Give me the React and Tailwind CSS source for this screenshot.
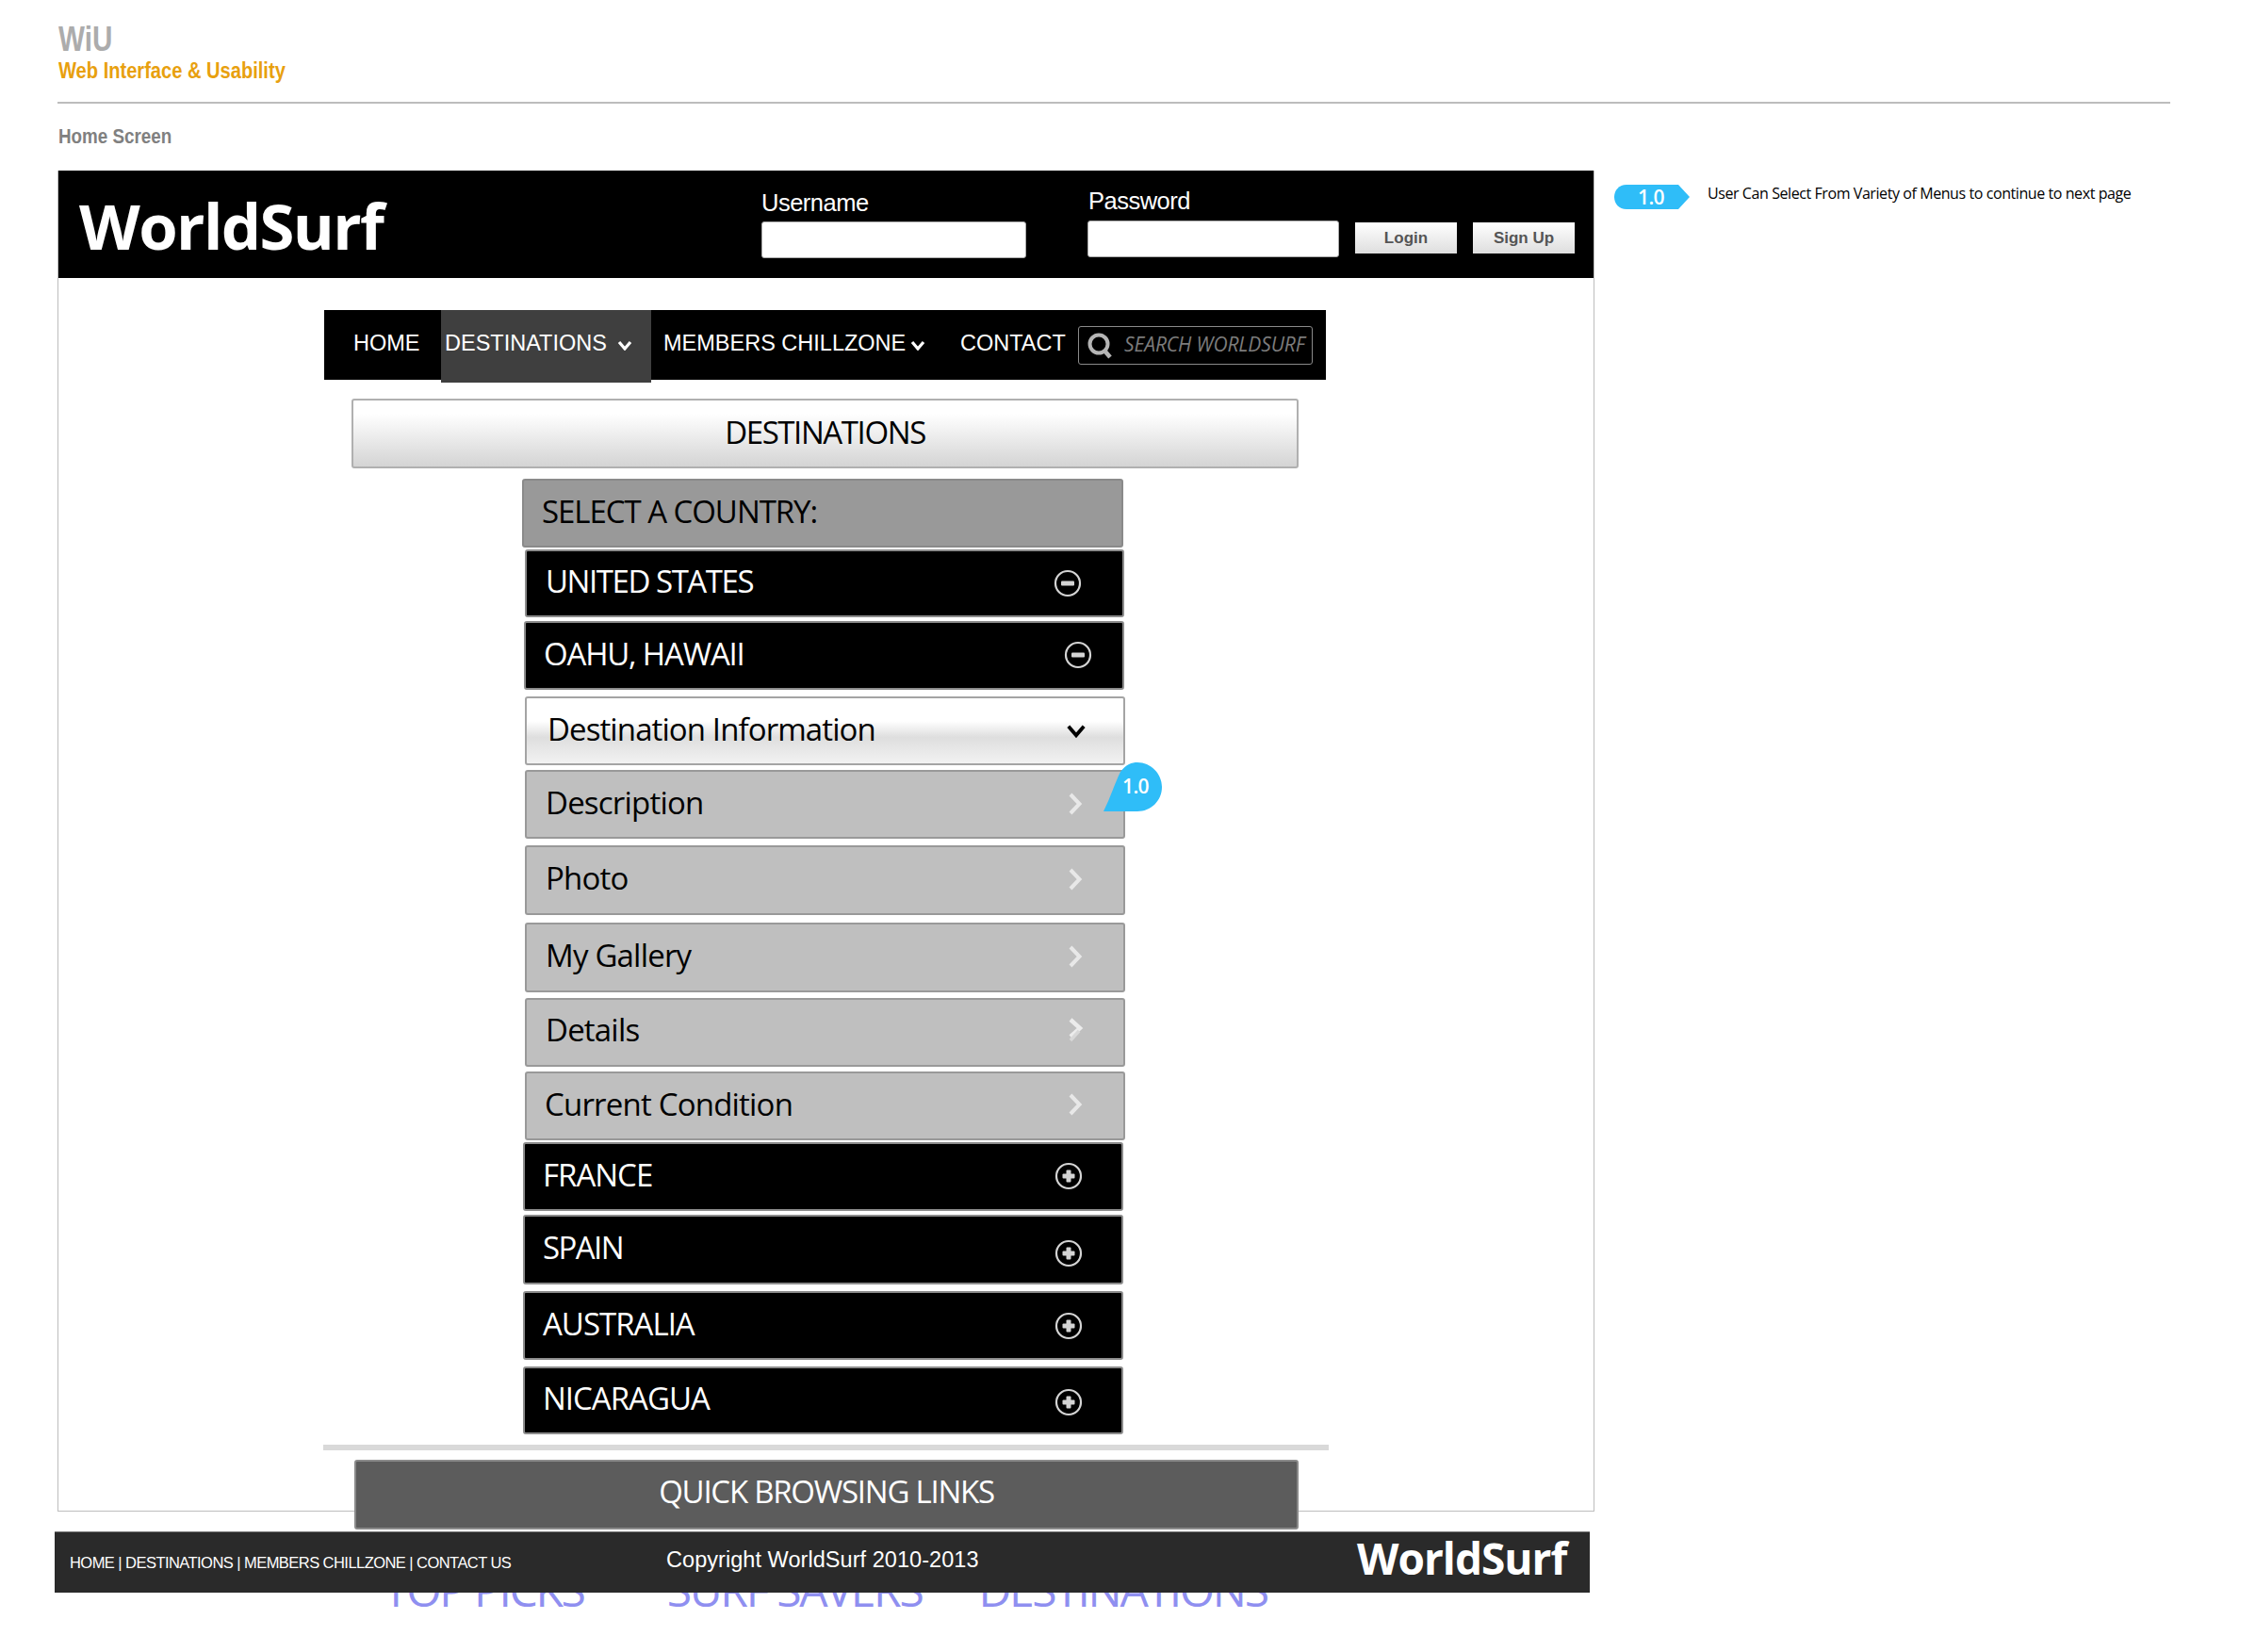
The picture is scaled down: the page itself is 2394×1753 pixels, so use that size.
const sans = "font-['Open_Sans',sans-serif]";
const arial = "font-['Liberation_Sans',Arial,sans-serif]";

function Chevron({ className = "" }) {
  return (
    <svg width="16" height="24" viewBox="0 0 16 24" className={className}>
      <path d="M3 2 L12.5 12 L3 22" fill="none" stroke="#e8e8e8" strokeWidth="4" />
    </svg>
  );
}

function DoubleChevron() {
  return (
    <svg width="18" height="26" viewBox="0 0 18 26">
      <path d="M4 2 L14 11 L4 20" fill="none" stroke="#ececec" strokeWidth="4.4" />
      <path d="M13 14 L4 24" fill="none" stroke="#d8d8d8" strokeWidth="3.4" />
    </svg>
  );
}

function CircleIcon({ plus }) {
  return (
    <svg width="30" height="30" viewBox="0 0 30 30">
      <circle cx="15" cy="15" r="13" fill="none" stroke="#d4d4d4" strokeWidth="2.2" />
      {plus ? (
        <>
          <rect x="8.5" y="12.5" width="13" height="5" fill="#d4d4d4" rx="1" />
          <rect x="12.5" y="8.5" width="5" height="13" fill="#d4d4d4" rx="1" />
        </>
      ) : (
        <rect x="8" y="12.5" width="14" height="5" fill="#d4d4d4" rx="1" />
      )}
    </svg>
  );
}

function SmallDown({ color = "#fff", w = 16, h = 11, sw = 3.2 }) {
  return (
    <svg width={w} height={h} viewBox="0 0 16 11">
      <path d="M2 2 L8 9 L14 2" fill="none" stroke={color} strokeWidth={sw} />
    </svg>
  );
}

function Row({ className, text, textClass, icon, iconClass, children }) {
  return (
    <div className={`relative flex shrink-0 items-center rounded-[3px] border-2 pb-[5px] ${className}`}>
      <span className={`whitespace-nowrap ${sans} text-[33px] leading-none ${textClass}`}>{text}</span>
      <span className={`absolute flex items-center justify-center ${iconClass}`}>{icon}</span>
      {children}
    </div>
  );
}

const black = "bg-black border-[#8c8c8c] text-white";
const gray = "bg-[#bfbfbf] border-[#999999] text-black";

export default function App() {
  return (
    <div className="relative h-[1753px] w-full overflow-hidden bg-white pl-[61px]">
      <div className={`h-[110px] w-[2242px] border-b-2 border-[#bdbdbd] ${arial}`}>
        <div className="ml-[1px] origin-left scale-x-[0.8] pt-[20px] text-[37px] font-bold leading-[43px] text-[#acacac]">WiU</div>
        <div className="ml-[1px] -mt-[1px] origin-left scale-x-[0.855] whitespace-nowrap text-[23.5px] font-bold leading-[26px] text-[#e8a00e]">Web Interface &amp; Usability</div>
      </div>
      <div className={`ml-[1px] h-[71px] origin-left scale-x-[0.855] whitespace-nowrap pt-[22px] text-[22px] font-bold leading-[26px] text-[#808080] ${arial}`}>Home Screen</div>

      <div className="flex items-start">
        <div className="flex h-[1423px] w-[1631px] shrink-0 flex-col border border-[#bdbdbd] border-t-0">
          {/* top bar */}
          <div className={`flex h-[114px] w-[1629px] shrink-0 items-start bg-black text-white ${arial}`}>
            <div className={`ml-[22px] mt-[13px] w-[724px] whitespace-nowrap text-[67px] font-bold leading-[90px] tracking-[-1.6px] ${sans}`}>WorldSurf</div>
            <div className="flex w-[346px] shrink-0 flex-col">
              <div className="pt-[14px] text-[25.5px] leading-[40px] tracking-[-0.5px]">Username</div>
              <div className="h-[39px] w-[281px] rounded-[3px] border border-[#aaaaaa] bg-white" />
            </div>
            <div className="flex w-[284px] shrink-0 flex-col">
              <div className="pl-[1px] pt-[12px] text-[25.5px] leading-[41px] tracking-[-0.5px]">Password</div>
              <div className="h-[39px] w-[267px] rounded-[3px] border border-[#aaaaaa] bg-white" />
            </div>
            <div className="mt-[55px] flex h-[33px] w-[108px] shrink-0 items-center justify-center bg-gradient-to-b from-[#ffffff] to-[#dedede] text-[17px] font-bold text-[#555555]">Login</div>
            <div className="ml-[17px] mt-[55px] flex h-[33px] w-[108px] shrink-0 items-center justify-center bg-gradient-to-b from-[#ffffff] to-[#dedede] text-[17px] font-bold text-[#555555]">Sign Up</div>
          </div>

          {/* nav */}
          <div className={`ml-[282px] mt-[34px] flex h-[74px] w-[1063px] shrink-0 items-start bg-black text-[23.5px] text-white ${arial}`}>
            <div className="flex h-[74px] w-[124px] shrink-0 items-center pb-[2px] pl-[31px]">HOME</div>
            <div className="flex h-[77px] w-[223px] shrink-0 items-center bg-[#3f3f3f] pb-[5px] pl-[4px]">
              <span>DESTINATIONS</span>
              <span className="ml-[11px] mt-[3px] flex"><SmallDown /></span>
            </div>
            <div className="flex h-[74px] w-[328px] shrink-0 items-center pb-[2px] pl-[13px]">
              <span>MEMBERS CHILLZONE</span>
              <span className="ml-[5px] mt-[3px] flex"><SmallDown /></span>
            </div>
            <div className="flex h-[74px] w-[125px] shrink-0 items-center pb-[2px]">CONTACT</div>
            <div className="mt-[17px] flex h-[41px] w-[249px] shrink-0 items-center rounded-[3px] border border-[#8a8a8a] bg-black pl-[8px]">
              <svg width="28" height="30" viewBox="0 0 28 30">
                <circle cx="13" cy="13" r="9.5" fill="none" stroke="#b5b5b5" strokeWidth="4" />
                <path d="M19 20 L25 27" stroke="#b5b5b5" strokeWidth="4.6" />
              </svg>
              <span className={`ml-[12px] -mt-[2px] whitespace-nowrap text-[21px] italic tracking-[-0.1px] text-[#7c7c7c] ${sans}`}>SEARCH WORLDSURF</span>
            </div>
          </div>

          {/* title */}
          <div className={`ml-[311px] mt-[20px] flex h-[74px] w-[1005px] shrink-0 items-center justify-center rounded-[3px] border-2 border-[#b0b0b0] bg-gradient-to-b from-[#ffffff] from-20% via-[#e4e4e4] via-70% to-[#d4d4d4] pb-[3px] text-[33px] tracking-[-1.4px] text-black ${sans}`}>DESTINATIONS</div>

          {/* menu */}
          <Row className="ml-[492px] mt-[11px] h-[73px] w-[638px] border-[#8a8a8a] bg-[#999999] text-black" text="SELECT A COUNTRY:" textClass="ml-[19px] tracking-[-1.05px]" />
          <Row className={`ml-[495px] mt-[2px] h-[72px] w-[636px] ${black}`} text="UNITED STATES" textClass="ml-[20px] tracking-[-1.45px]" icon={<CircleIcon />} iconClass="left-[559px] top-[19px]" />
          <Row className={`ml-[494px] mt-[4px] h-[73px] w-[637px] ${black}`} text="OAHU, HAWAII" textClass="ml-[19px] tracking-[-1.2px]" icon={<CircleIcon />} iconClass="left-[571px] top-[19px]" />
          <Row className={`ml-[495px] mt-[7px] h-[73px] w-[637px] border-[#a4a4a4] bg-gradient-to-b from-[#ffffff] from-35% via-[#dedede] via-60% to-[#f2f2f2] text-black`} text="Destination Information" textClass="ml-[22px] tracking-[-0.9px]" icon={<SmallDown color="#000000" w={22} h={15} sw={2.8} />} iconClass="left-[572px] top-[27px]" />
          <Row className={`ml-[495px] mt-[5px] h-[73px] w-[637px] ${gray}`} text="Description" textClass="ml-[20px] tracking-[-0.8px]" icon={<Chevron />} iconClass="left-[574px] top-[22px]">
            <div className="absolute left-[612px] top-[-10px] h-[52px] w-[62px]">
              <svg width="62" height="52" viewBox="0 0 62 52" className="block">
                <path d="M0 52 C8 36 12 22 18 10 C24 2 30 0 36 0 C50 0 62 12 62 26 C62 41 50 52 36 52 Z" fill="#2fbdf8" />
              </svg>
              <span className={`absolute left-[20px] top-[11px] text-[21px] font-semibold leading-[28px] tracking-[-0.6px] text-white ${sans}`}>1.0</span>
            </div>
          </Row>
          <Row className={`ml-[495px] mt-[7px] h-[74px] w-[637px] ${gray}`} text="Photo" textClass="ml-[20px] tracking-[-0.8px]" icon={<Chevron />} iconClass="left-[574px] top-[22px]" />
          <Row className={`ml-[495px] mt-[8px] h-[74px] w-[637px] ${gray}`} text="My Gallery" textClass="ml-[20px] tracking-[-0.8px]" icon={<Chevron />} iconClass="left-[574px] top-[22px]" />
          <Row className={`ml-[495px] mt-[6px] h-[73px] w-[637px] pb-[7px] ${gray}`} text="Details" textClass="ml-[20px] tracking-[-0.8px]" icon={<DoubleChevron />} iconClass="left-[573px] top-[19px]" />
          <Row className={`ml-[495px] mt-[5px] h-[73px] w-[637px] ${gray}`} text="Current Condition" textClass="ml-[19px] tracking-[-0.8px]" icon={<Chevron />} iconClass="left-[574px] top-[21px]" />
          <Row className={`ml-[493px] mt-[2px] h-[73px] w-[637px] ${black}`} text="FRANCE" textClass="ml-[19px] tracking-[-1px]" icon={<CircleIcon plus />} iconClass="left-[562px] top-[19px]" />
          <Row className={`ml-[493px] mt-[4px] h-[74px] w-[637px] ${black}`} text="SPAIN" textClass="ml-[19px] tracking-[-1.6px]" icon={<CircleIcon plus />} iconClass="left-[562px] top-[24px]" />
          <Row className={`ml-[493px] mt-[7px] h-[73px] w-[637px] ${black}`} text="AUSTRALIA" textClass="ml-[19px] tracking-[-1px]" icon={<CircleIcon plus />} iconClass="left-[562px] top-[20px]" />
          <Row className={`ml-[493px] mt-[7px] h-[72px] w-[637px] ${black}`} text="NICARAGUA" textClass="ml-[19px] tracking-[-1px]" icon={<CircleIcon plus />} iconClass="left-[562px] top-[21px]" />

          <div className="ml-[281px] mt-[11px] h-[6px] w-[1067px] shrink-0 bg-[#d9d9d9]" />
          <div className={`relative z-10 ml-[314px] mt-[10px] flex h-[74px] w-[1002px] shrink-0 items-center justify-center rounded-[3px] border-2 border-[#8a8a8a] bg-[#5c5c5c] pb-[6px] text-[33px] tracking-[-1.25px] text-white ${sans}`}>QUICK BROWSING LINKS</div>
        </div>

        <div className="ml-[21px] mt-[15px] flex items-start">
          <div className="relative h-[26px] w-[80px] shrink-0">
            <svg width="80" height="26" viewBox="0 0 80 26" className="block">
              <path d="M13 0 H68 L80 13 L68 26 H13 C5 26 0 20 0 13 C0 6 5 0 13 0 Z" fill="#2fbdf8" />
            </svg>
            <span className={`absolute left-[25px] top-[0px] text-[21px] font-semibold leading-[27px] tracking-[-0.6px] text-white ${sans}`}>1.0</span>
          </div>
          <span className={`-mt-[3px] ml-[19px] whitespace-nowrap text-[16px] leading-[24px] tracking-[-0.42px] text-black ${sans}`}>User Can Select From Variety of Menus to continue to next page</span>
        </div>
      </div>

      {/* footer */}
      <div className={`relative z-20 -ml-[3px] mt-[21px] flex h-[65px] w-[1629px] items-start border-t border-[#777777] bg-[#2a2a2a] text-white ${arial}`}>
        <div className="w-[649px] shrink-0 whitespace-nowrap pl-[16px] pt-[20px] text-[16.5px] leading-[24px] tracking-[-0.55px]">HOME | DESTINATIONS | MEMBERS CHILLZONE | CONTACT US</div>
        <div className="w-[733px] shrink-0 whitespace-nowrap pt-[14px] text-[23.5px] leading-[30px] tracking-[0.05px]">Copyright WorldSurf 2010-2013</div>
        <div className={`whitespace-nowrap -mt-[3px] text-[46px] font-bold leading-[60px] tracking-[-1px] ${sans}`}>WorldSurf</div>
      </div>

      {/* clipped links behind footer */}
      <div className={`relative z-0 -mt-[28px] flex h-[50px] items-end text-[48px] leading-[50px] tracking-[-2.3px] text-[#8f8ff0] ${sans}`}>
        <span className="ml-[346px] whitespace-nowrap">TOP PICKS</span>
        <span className="ml-[88px] whitespace-nowrap">SURF SAVERS</span>
        <span className="ml-[60px] whitespace-nowrap">DESTINATIONS</span>
      </div>
    </div>
  );
}
